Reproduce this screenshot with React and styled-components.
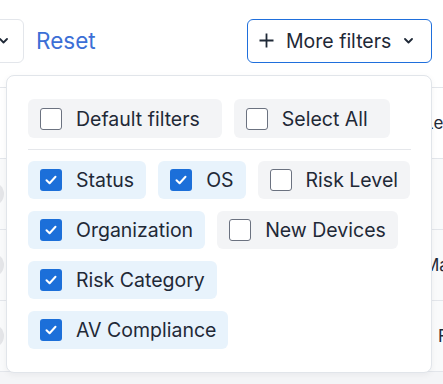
import React, { useState } from "react";
import styled, { createGlobalStyle } from "styled-components";

const GlobalStyle = createGlobalStyle`
  html, body {
    margin: 0;
    padding: 0;
    background: #ffffff;
    font-family: Inter, "Noto Sans", sans-serif;
    color: #1f2937;
  }
`;

const Page = styled.div`
  position: relative;
  width: 443px;
  height: 384px;
  overflow: hidden;
  background: #f4f5f7;
`;

const Toolbar = styled.div`
  display: flex;
  align-items: center;
  height: 87px;
  padding: 0 11px 0 0;
  box-sizing: border-box;
  background: #ffffff;
`;

const SelectBox = styled.div`
  display: flex;
  align-items: center;
  justify-content: flex-end;
  width: 80px;
  height: 44px;
  margin-left: -56px;
  margin-top: -6px;
  padding-right: 15px;
  box-sizing: border-box;
  border: 1px solid #e3e6eb;
  border-radius: 6px;
  background: #fff;
`;

const ResetLink = styled.a`
  margin-left: 12px;
  margin-top: -6px;
  font-size: 22.5px;
  color: #3c6fd6;
  cursor: pointer;
`;

const MoreButton = styled.button`
  margin-left: auto;
  margin-top: -6px;
  display: flex;
  align-items: center;
  width: 185px;
  height: 44px;
  padding: 0 0 0 11px;
  box-sizing: border-box;
  background: #fff;
  border: 1px solid #1f6fdc;
  border-radius: 6px;
  font-family: inherit;
  font-size: 19.5px;
  color: #1f2937;
  cursor: pointer;
  span {
    margin-left: 12px;
    margin-right: 13px;
  }
`;

const Table = styled.div`
  margin: 0 -70px 0 -20px;
  border-top: 1px solid #e3e6eb;
`;

const Row = styled.div`
  display: grid;
  grid-template-columns: 32px 1fr 89px;
  align-items: center;
  height: 70px;
  border-bottom: 1px solid #e3e6eb;
  background: ${(p) => (p.$head ? "#ffffff" : "#f9fafb")};
  font-size: 17px;
`;

const Avatar = styled.div`
  width: 24px;
  height: 24px;
  border-radius: 50%;
  background: #e4e5e8;
`;

const Cell = styled.div`
  padding-left: ${(p) => p.$indent || 0}px;
  white-space: nowrap;
`;

const Popup = styled.div`
  position: absolute;
  top: 75px;
  left: 6px;
  width: 426px;
  height: 298px;
  box-sizing: border-box;
  padding: 23px 20px 23px 21px;
  background: #fff;
  border: 1px solid #e1e5ea;
  border-radius: 8px;
  box-shadow: 0 2px 6px rgba(15, 23, 42, 0.05);
`;

const ChipList = styled.div`
  display: flex;
  flex-direction: column;
  gap: 12px;
`;

const ChipRow = styled.div`
  display: flex;
  gap: 12px;
`;

const Divider = styled.div`
  height: 1px;
  background: #e5e7eb;
  margin: 11px 0;
`;

const Chip = styled.label`
  display: flex;
  align-items: center;
  flex-shrink: 0;
  height: ${(p) => (p.$wide ? 39 : 38)}px;
  padding: 0 ${(p) => (p.$wide ? 22 : 12)}px 0 12px;
  box-sizing: border-box;
  border-radius: 6px;
  background: ${(p) => (p.$on ? "#e8f3fc" : "#f3f4f6")};
  font-size: 19.5px;
  white-space: nowrap;
  color: #1f2937;
  cursor: pointer;
`;

const Box = styled.span`
  display: flex;
  align-items: center;
  justify-content: center;
  width: 22px;
  height: 22px;
  margin-right: 14px;
  box-sizing: border-box;
  border-radius: 3px;
  border: ${(p) => (p.$on ? "none" : "1.5px solid #6b7280")};
  background: ${(p) => (p.$on ? "#1c6fd9" : "#fff")};
`;

const Check = () => (
  <svg width="12" height="10" viewBox="0 0 12 10" fill="none">
    <path d="M1.5 5.2 L4.6 8.2 L10.5 1.8" stroke="#fff" strokeWidth="2" strokeLinecap="round" strokeLinejoin="round" />
  </svg>
);

const Chevron = ({ color = "#1f2937" }) => (
  <svg width="9" height="6" viewBox="0 0 9 6" fill="none">
    <path d="M1 1 L4.5 4.5 L8 1" stroke={color} strokeWidth="1.8" strokeLinecap="round" strokeLinejoin="round" />
  </svg>
);

const Plus = () => (
  <svg width="15" height="15" viewBox="0 0 15 15" fill="none">
    <path d="M7.5 0.5 V14.5 M0.5 7.5 H14.5" stroke="#1f2937" strokeWidth="1.8" />
  </svg>
);

const Option = ({ label, on, wide, onToggle }) => (
  <Chip $on={on} $wide={wide} onClick={onToggle}>
    <Box $on={on}>{on && <Check />}</Box>
    {label}
  </Chip>
);

const initial = {
  Status: true,
  OS: true,
  "Risk Level": false,
  Organization: true,
  "New Devices": false,
  "Risk Category": true,
  "AV Compliance": true,
};

const lines = [
  ["Status", "OS", "Risk Level"],
  ["Organization", "New Devices"],
  ["Risk Category"],
  ["AV Compliance"],
];

const App = () => {
  const [filters, setFilters] = useState(initial);
  const toggle = (k) => setFilters((f) => ({ ...f, [k]: !f[k] }));

  return (
    <Page>
      <GlobalStyle />
      <Toolbar>
        <SelectBox>
          <Chevron />
        </SelectBox>
        <ResetLink>Reset</ResetLink>
        <MoreButton>
          <Plus />
          <span>More filters</span>
          <Chevron />
        </MoreButton>
      </Toolbar>

      <Table>
        <Row $head>
          <Cell>C</Cell>
          <Cell />
          <Cell>Level</Cell>
        </Row>
        <Row>
          <Avatar />
          <Cell />
          <Cell />
        </Row>
        <Row>
          <Avatar />
          <Cell />
          <Cell>Mac</Cell>
        </Row>
        <Row>
          <Avatar />
          <Cell />
          <Cell $indent={14}>Fail</Cell>
        </Row>
      </Table>

      <Popup>
        <ChipRow>
          <Option label="Default filters" wide />
          <Option label="Select All" wide />
        </ChipRow>
        <Divider />
        <ChipList>
          {lines.map((line) => (
            <ChipRow key={line[0]}>
              {line.map((k) => (
                <Option key={k} label={k} on={filters[k]} onToggle={() => toggle(k)} />
              ))}
            </ChipRow>
          ))}
        </ChipList>
      </Popup>
    </Page>
  );
};

export default App;
